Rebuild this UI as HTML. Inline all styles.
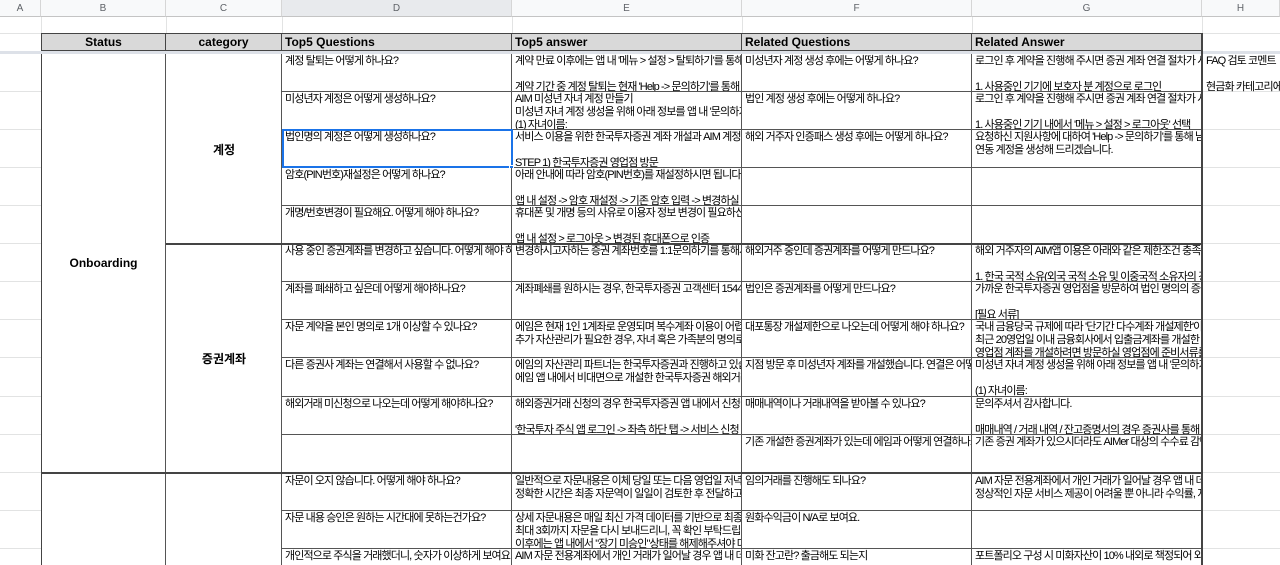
<!DOCTYPE html>
<html><head><meta charset="utf-8">
<style>
*{margin:0;padding:0;box-sizing:border-box}
html,body{width:1280px;height:565px;overflow:hidden}
body{background:#fff;position:relative;font-family:"Liberation Sans","Noto Sans CJK KR",sans-serif;color:#000}
.ch{position:absolute;top:0;height:17px;background:#f8f9fa;border-right:1px solid #d6d6d6;border-bottom:1px solid #c4c4c4;font-size:10px;color:#5f6368;text-align:center;line-height:17px}
.gl{position:absolute;background:#e2e3e3}
.c{position:absolute;overflow:hidden;white-space:pre;font-size:11px;letter-spacing:-0.9px;line-height:13px;padding:1px 3px;border-right:1px solid #555;border-bottom:1px solid #555;background:#fff}
.h{position:absolute;top:33px;height:18px;background:#d9d9d9;border:1px solid #444;border-left:none;font-weight:bold;font-size:12px;line-height:16px;padding-left:3px;overflow:hidden;white-space:nowrap}
.lab{position:absolute;font-weight:bold;font-size:12px;text-align:center}
.hc{position:absolute;left:1206px;font-size:11px;letter-spacing:-0.9px;white-space:pre;line-height:13px}
</style></head><body>
<div class="ch" style="left:0;width:41px">A</div>
<div class="ch" style="left:41px;width:125px">B</div>
<div class="ch" style="left:166px;width:116px">C</div>
<div class="ch" style="left:282px;width:230px;background:#e8eaed">D</div>
<div class="ch" style="left:512px;width:230px">E</div>
<div class="ch" style="left:742px;width:230px">F</div>
<div class="ch" style="left:972px;width:230px">G</div>
<div class="ch" style="left:1202px;width:78px">H</div>
<div class="gl" style="left:0;top:33px;width:1280px;height:1px"></div>
<div class="gl" style="left:41px;top:17px;width:1px;height:16px"></div>
<div class="gl" style="left:166px;top:17px;width:1px;height:16px"></div>
<div class="gl" style="left:282px;top:17px;width:1px;height:16px"></div>
<div class="gl" style="left:512px;top:17px;width:1px;height:16px"></div>
<div class="gl" style="left:742px;top:17px;width:1px;height:16px"></div>
<div class="gl" style="left:972px;top:17px;width:1px;height:16px"></div>
<div class="gl" style="left:1202px;top:17px;width:1px;height:16px"></div>
<div class="gl" style="left:0;top:91px;width:41px;height:1px"></div>
<div class="gl" style="left:0;top:129px;width:41px;height:1px"></div>
<div class="gl" style="left:0;top:167px;width:41px;height:1px"></div>
<div class="gl" style="left:0;top:205px;width:41px;height:1px"></div>
<div class="gl" style="left:0;top:243px;width:41px;height:1px"></div>
<div class="gl" style="left:0;top:281px;width:41px;height:1px"></div>
<div class="gl" style="left:0;top:319px;width:41px;height:1px"></div>
<div class="gl" style="left:0;top:357px;width:41px;height:1px"></div>
<div class="gl" style="left:0;top:396px;width:41px;height:1px"></div>
<div class="gl" style="left:0;top:434px;width:41px;height:1px"></div>
<div class="gl" style="left:0;top:472px;width:41px;height:1px"></div>
<div class="gl" style="left:0;top:510px;width:41px;height:1px"></div>
<div class="gl" style="left:0;top:548px;width:41px;height:1px"></div>
<div class="gl" style="left:1202px;top:91px;width:78px;height:1px"></div>
<div class="gl" style="left:1202px;top:129px;width:78px;height:1px"></div>
<div class="gl" style="left:1202px;top:167px;width:78px;height:1px"></div>
<div class="gl" style="left:1202px;top:205px;width:78px;height:1px"></div>
<div class="gl" style="left:1202px;top:243px;width:78px;height:1px"></div>
<div class="gl" style="left:1202px;top:281px;width:78px;height:1px"></div>
<div class="gl" style="left:1202px;top:319px;width:78px;height:1px"></div>
<div class="gl" style="left:1202px;top:357px;width:78px;height:1px"></div>
<div class="gl" style="left:1202px;top:396px;width:78px;height:1px"></div>
<div class="gl" style="left:1202px;top:434px;width:78px;height:1px"></div>
<div class="gl" style="left:1202px;top:472px;width:78px;height:1px"></div>
<div class="gl" style="left:1202px;top:510px;width:78px;height:1px"></div>
<div class="gl" style="left:1202px;top:548px;width:78px;height:1px"></div>
<div class="h" style="left:41px;width:125px;border-left:1px solid #444;text-align:center;padding:0">Status</div>
<div class="h" style="left:166px;width:116px;text-align:center;padding:0">category</div>
<div class="h" style="left:282px;width:230px">Top5 Questions</div>
<div class="h" style="left:512px;width:230px">Top5 answer</div>
<div class="h" style="left:742px;width:230px">Related Questions</div>
<div class="h" style="left:972px;width:230px">Related Answer</div>
<div style="position:absolute;left:0;top:51px;width:1280px;height:3px;background:#dde1e8"></div>
<div class="c" style="left:41px;top:54px;width:125px;height:419px;border-left:1px solid #444"></div>
<div class="lab" style="left:41px;top:256px;width:125px">Onboarding</div>
<div class="c" style="left:166px;top:54px;width:116px;height:190px"></div>
<div class="lab" style="left:166px;top:141px;width:116px">계정</div>
<div class="c" style="left:166px;top:244px;width:116px;height:229px"></div>
<div class="lab" style="left:166px;top:350px;width:116px">증권계좌</div>
<div class="c" style="left:41px;top:473px;width:125px;height:100px;border-left:1px solid #444;border-top:1px solid #444"></div>
<div class="c" style="left:166px;top:473px;width:116px;height:100px;border-top:1px solid #444"></div>

<div class="c" style="left:282px;top:54px;width:230px;height:38px">계정 탈퇴는 어떻게 하나요?</div>
<div class="c" style="left:512px;top:54px;width:230px;height:38px">계약 만료 이후에는 앱 내 '메뉴 > 설정 > 탈퇴하기'를 통해

계약 기간 중 계정 탈퇴는 현재 'Help -> 문의하기'를 통해</div>
<div class="c" style="left:742px;top:54px;width:230px;height:38px">미성년자 계정 생성 후에는 어떻게 하나요?</div>
<div class="c" style="left:972px;top:54px;width:230px;height:38px">로그인 후 계약을 진행해 주시면 증권 계좌 연결 절차가 시작

1. 사용중인 기기에 보호자 분 계정으로 로그인</div>

<div class="c" style="left:282px;top:92px;width:230px;height:38px">미성년자 계정은 어떻게 생성하나요?</div>
<div class="c" style="left:512px;top:92px;width:230px;height:38px">AIM 미성년 자녀 계정 만들기
미성년 자녀 계정 생성을 위해 아래 정보를 앱 내 '문의하기
(1) 자녀이름:</div>
<div class="c" style="left:742px;top:92px;width:230px;height:38px">법인 계정 생성 후에는 어떻게 하나요?</div>
<div class="c" style="left:972px;top:92px;width:230px;height:38px">로그인 후 계약을 진행해 주시면 증권 계좌 연결 절차가 시작

1. 사용중인 기기 내에서 '메뉴 > 설정 > 로그아웃' 선택</div>

<div class="c" style="left:282px;top:130px;width:230px;height:38px">법인명의 계정은 어떻게 생성하나요?</div>
<div class="c" style="left:512px;top:130px;width:230px;height:38px">서비스 이용을 위한 한국투자증권 계좌 개설과 AIM 계정 연

STEP 1) 한국투자증권 영업점 방문</div>
<div class="c" style="left:742px;top:130px;width:230px;height:38px">해외 거주자 인증패스 생성 후에는 어떻게 하나요?</div>
<div class="c" style="left:972px;top:130px;width:230px;height:38px">요청하신 지원사항에 대하여 'Help -> 문의하기'를 통해 남겨
연동 계정을 생성해 드리겠습니다.</div>
<div style="position:absolute;left:282px;top:129px;width:231px;height:39px;border:2px solid #1a73e8"></div>
<div style="position:absolute;left:509px;top:165px;width:5px;height:5px;background:#1a73e8;border:1px solid #fff"></div>

<div class="c" style="left:282px;top:168px;width:230px;height:38px">암호(PIN번호)재설정은 어떻게 하나요?</div>
<div class="c" style="left:512px;top:168px;width:230px;height:38px">아래 안내에 따라 암호(PIN번호)를 재설정하시면 됩니다.

앱 내 설정 -> 암호 재설정 -> 기존 암호 입력 -> 변경하실</div>
<div class="c" style="left:742px;top:168px;width:230px;height:38px"></div>
<div class="c" style="left:972px;top:168px;width:230px;height:38px"></div>

<div class="c" style="left:282px;top:206px;width:230px;height:38px">개명/번호변경이 필요해요. 어떻게 해야 하나요?</div>
<div class="c" style="left:512px;top:206px;width:230px;height:38px">휴대폰 및 개명 등의 사유로 이용자 정보 변경이 필요하신

앱 내 설정 > 로그아웃 > 변경된 휴대폰으로 인증</div>
<div class="c" style="left:742px;top:206px;width:230px;height:38px"></div>
<div class="c" style="left:972px;top:206px;width:230px;height:38px"></div>

<div class="c" style="left:282px;top:244px;width:230px;height:38px">사용 중인 증권계좌를 변경하고 싶습니다. 어떻게 해야 하나요?</div>
<div class="c" style="left:512px;top:244px;width:230px;height:38px">변경하시고자하는 증권 계좌번호를 1:1문의하기를 통해서</div>
<div class="c" style="left:742px;top:244px;width:230px;height:38px">해외거주 중인데 증권계좌를 어떻게 만드나요?</div>
<div class="c" style="left:972px;top:244px;width:230px;height:38px">해외 거주자의 AIM앱 이용은 아래와 같은 제한조건 충족이

1. 한국 국적 소유(외국 국적 소유 및 이중국적 소유자의 경우</div>

<div class="c" style="left:282px;top:282px;width:230px;height:38px">계좌를 폐쇄하고 싶은데 어떻게 해야하나요?</div>
<div class="c" style="left:512px;top:282px;width:230px;height:38px">계좌폐쇄를 원하시는 경우, 한국투자증권 고객센터 1544-5000</div>
<div class="c" style="left:742px;top:282px;width:230px;height:38px">법인은 증권계좌를 어떻게 만드나요?</div>
<div class="c" style="left:972px;top:282px;width:230px;height:38px">가까운 한국투자증권 영업점을 방문하여 법인 명의의 증권계좌

[필요 서류]</div>

<div class="c" style="left:282px;top:320px;width:230px;height:38px">자문 계약을 본인 명의로 1개 이상할 수 있나요?</div>
<div class="c" style="left:512px;top:320px;width:230px;height:38px">에임은 현재 1인 1계좌로 운영되며 복수계좌 이용이 어렵습니다.
추가 자산관리가 필요한 경우, 자녀 혹은 가족분의 명의로</div>
<div class="c" style="left:742px;top:320px;width:230px;height:38px">대포통장 개설제한으로 나오는데 어떻게 해야 하나요?</div>
<div class="c" style="left:972px;top:320px;width:230px;height:38px">국내 금융당국 규제에 따라 '단기간 다수계좌 개설제한'이 있어
최근 20영업일 이내 금융회사에서 입출금계좌를 개설한 고객은
영업점 계좌를 개설하려면 방문하실 영업점에 준비서류를</div>

<div class="c" style="left:282px;top:358px;width:230px;height:39px">다른 증권사 계좌는 연결해서 사용할 수 없나요?</div>
<div class="c" style="left:512px;top:358px;width:230px;height:39px">에임의 자산관리 파트너는 한국투자증권과 진행하고 있습니다.
에임 앱 내에서 비대면으로 개설한 한국투자증권 해외거래</div>
<div class="c" style="left:742px;top:358px;width:230px;height:39px">지점 방문 후 미성년자 계좌를 개설했습니다. 연결은 어떻게 하나요?</div>
<div class="c" style="left:972px;top:358px;width:230px;height:39px">미성년 자녀 계정 생성을 위해 아래 정보를 앱 내 '문의하기'

(1) 자녀이름:</div>

<div class="c" style="left:282px;top:397px;width:230px;height:38px">해외거래 미신청으로 나오는데 어떻게 해야하나요?</div>
<div class="c" style="left:512px;top:397px;width:230px;height:38px">해외증권거래 신청의 경우 한국투자증권 앱 내에서 신청이

'한국투자 주식 앱 로그인 -> 좌측 하단 탭 -> 서비스 신청</div>
<div class="c" style="left:742px;top:397px;width:230px;height:38px">매매내역이나 거래내역을 받아볼 수 있나요?</div>
<div class="c" style="left:972px;top:397px;width:230px;height:38px">문의주셔서 감사합니다.

매매내역 / 거래 내역 / 잔고증명서의 경우 증권사를 통해 발급</div>

<div class="c" style="left:282px;top:435px;width:230px;height:38px"></div>
<div class="c" style="left:512px;top:435px;width:230px;height:38px"></div>
<div class="c" style="left:742px;top:435px;width:230px;height:38px">기존 개설한 증권계좌가 있는데 에임과 어떻게 연결하나요?</div>
<div class="c" style="left:972px;top:435px;width:230px;height:38px">기존 증권 계좌가 있으시더라도 AIMer 대상의 수수료 감면</div>

<div class="c" style="left:282px;top:473px;width:230px;height:38px;border-top:1px solid #444">자문이 오지 않습니다. 어떻게 해야 하나요?</div>
<div class="c" style="left:512px;top:473px;width:230px;height:38px;border-top:1px solid #444">일반적으로 자문내용은 이체 당일 또는 다음 영업일 저녁 7시
정확한 시간은 최종 자문역이 일일이 검토한 후 전달하고 있</div>
<div class="c" style="left:742px;top:473px;width:230px;height:38px;border-top:1px solid #444">임의거래를 진행해도 되나요?</div>
<div class="c" style="left:972px;top:473px;width:230px;height:38px;border-top:1px solid #444">AIM 자문 전용계좌에서 개인 거래가 일어날 경우 앱 내 데이터
정상적인 자문 서비스 제공이 어려울 뿐 아니라 수익률, 지표</div>

<div class="c" style="left:282px;top:511px;width:230px;height:38px">자문 내용 승인은 원하는 시간대에 못하는건가요?</div>
<div class="c" style="left:512px;top:511px;width:230px;height:38px">상세 자문내용은 매일 최신 가격 데이터를 기반으로 최종 자문
최대 3회까지 자문을 다시 보내드리니, 꼭 확인 부탁드립니다.
이후에는 앱 내에서 "장기 미승인"상태를 해제해주셔야 다시</div>
<div class="c" style="left:742px;top:511px;width:230px;height:38px">원화수익금이 N/A로 보여요.</div>
<div class="c" style="left:972px;top:511px;width:230px;height:38px"></div>

<div class="c" style="left:282px;top:549px;width:230px;height:38px">개인적으로 주식을 거래했더니, 숫자가 이상하게 보여요. 어떻게</div>
<div class="c" style="left:512px;top:549px;width:230px;height:38px">AIM 자문 전용계좌에서 개인 거래가 일어날 경우 앱 내 데이터</div>
<div class="c" style="left:742px;top:549px;width:230px;height:38px">미화 잔고란? 출금해도 되는지</div>
<div class="c" style="left:972px;top:549px;width:230px;height:38px">포트폴리오 구성 시 미화자산이 10% 내외로 책정되어 외화</div>

<div style="position:absolute;left:166px;top:243px;width:1037px;height:2px;background:#444"></div>
<div style="position:absolute;left:41px;top:472px;width:1162px;height:2px;background:#444"></div>
<div style="position:absolute;left:1201px;top:33px;width:2px;height:532px;background:#444"></div>

<div class="hc" style="top:55px">FAQ 검토 코멘트

현금화 카테고리에</div>
</body></html>
